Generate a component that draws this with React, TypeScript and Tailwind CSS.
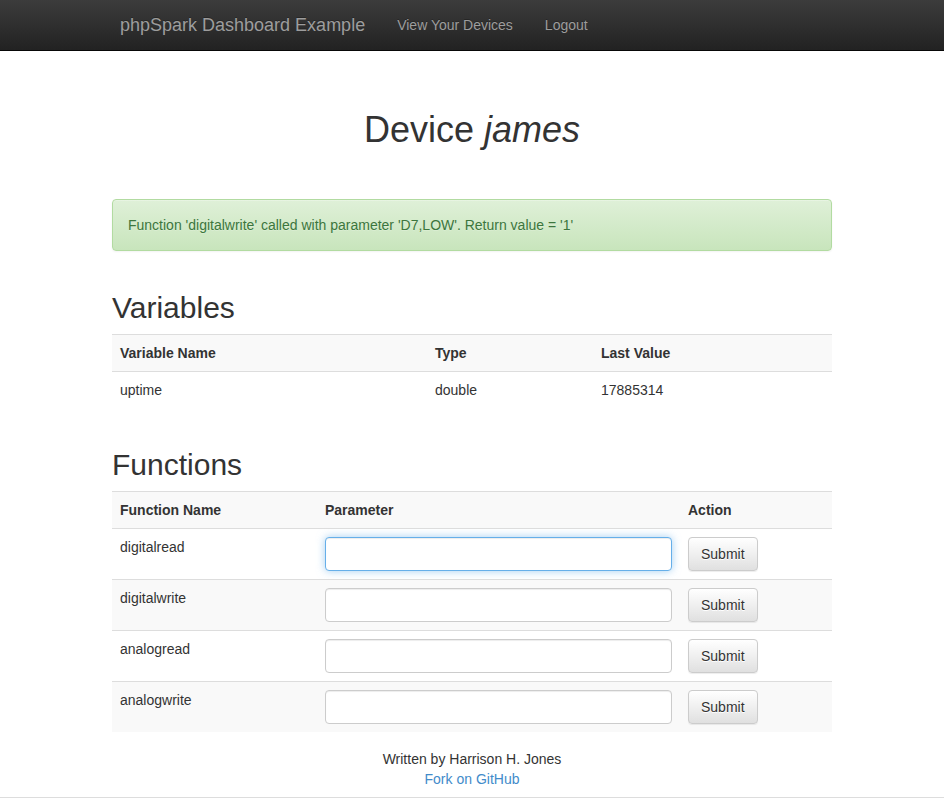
import React from 'react';

const variables = [{ name: 'uptime', type: 'double', value: '17885314' }];
const functions = ['digitalread', 'digitalwrite', 'analogread', 'analogwrite'];

export default function App() {
  return (
    <div className="min-h-screen bg-white text-[14px] leading-[20px] text-[#333] font-['Liberation_Sans',Arial,sans-serif]">
      <nav className="h-[51px] border-b border-[#080808] bg-[linear-gradient(to_bottom,#3c3c3c_0%,#222_100%)]">
        <div className="mx-auto flex h-[50px] w-[750px] px-[8px]">
          <a className="block py-[15px] pl-[15px] pr-[16px] text-[18px] leading-[20px] text-[#9d9d9d] [text-shadow:0_-1px_0_rgba(0,0,0,0.25)]" href="#">
            phpSpark Dashboard Example
          </a>
          <a className="block py-[15px] pl-[16px] pr-[16px] leading-[20px] text-[#9d9d9d] [text-shadow:0_-1px_0_rgba(0,0,0,0.25)]" href="#">
            View Your Devices
          </a>
          <a className="block py-[15px] pl-[16px] pr-[15px] leading-[20px] text-[#9d9d9d] [text-shadow:0_-1px_0_rgba(0,0,0,0.25)]" href="#">
            Logout
          </a>
        </div>
      </nav>

      <main className="mx-auto w-[750px] px-[15px]">
        <h1 className="mt-[59px] text-center text-[36px] leading-[40px] font-normal">
          Device <em>james</em>
        </h1>

        <div className="mt-[49px] rounded-[4px] border border-[#b2dba1] bg-[linear-gradient(to_bottom,#dff0d8_0%,#c8e5bc_100%)] p-[15px] text-[#3c763d] shadow-[inset_0_1px_0_rgba(255,255,255,0.25),0_1px_2px_rgba(0,0,0,0.05)] [text-shadow:0_1px_0_rgba(255,255,255,0.2)]">
          Function 'digitalwrite' called with parameter 'D7,LOW'. Return value = '1'
        </div>

        <h2 className="mt-[40px] mb-[10px] text-[30px] leading-[33px] font-normal">Variables</h2>
        <table className="w-full border-collapse">
          <tbody>
            <tr className="bg-[#f9f9f9]">
              <th className="w-[315px] border-t border-[#ddd] p-[8px] text-left font-bold">Variable Name</th>
              <th className="w-[166px] border-t border-[#ddd] p-[8px] text-left font-bold">Type</th>
              <th className="border-t border-[#ddd] p-[8px] text-left font-bold">Last Value</th>
            </tr>
            {variables.map((v) => (
              <tr key={v.name}>
                <td className="border-t border-[#ddd] p-[8px] align-top">{v.name}</td>
                <td className="border-t border-[#ddd] p-[8px] align-top">{v.type}</td>
                <td className="border-t border-[#ddd] p-[8px] align-top">{v.value}</td>
              </tr>
            ))}
          </tbody>
        </table>

        <h2 className="mt-[40px] mb-[10px] text-[30px] leading-[33px] font-normal">Functions</h2>
        <table className="w-full border-collapse">
          <tbody>
            <tr className="bg-[#f9f9f9]">
              <th className="w-[205px] border-t border-[#ddd] p-[8px] text-left font-bold">Function Name</th>
              <th className="w-[363px] border-t border-[#ddd] p-[8px] text-left font-bold">Parameter</th>
              <th className="border-t border-[#ddd] p-[8px] text-left font-bold">Action</th>
            </tr>
            {functions.map((f, i) => (
              <tr key={f} className={i % 2 === 1 ? 'bg-[#f9f9f9]' : ''}>
                <td className="border-t border-[#ddd] p-[8px] align-top">{f}</td>
                <td className="border-t border-[#ddd] p-[8px] align-top">
                  <input
                    type="text"
                    className={`block h-[34px] w-full rounded-[4px] border bg-white px-[12px] py-[6px] outline-none ${
                      i === 0
                        ? 'border-[#66afe9] shadow-[inset_0_1px_1px_rgba(0,0,0,0.075),0_0_8px_rgba(102,175,233,0.6)]'
                        : 'border-[#ccc] shadow-[inset_0_1px_1px_rgba(0,0,0,0.075)]'
                    }`}
                  />
                </td>
                <td className="border-t border-[#ddd] p-[8px] align-top">
                  <button
                    type="button"
                    className="h-[34px] rounded-[4px] border border-[#ccc] bg-[linear-gradient(to_bottom,#fff_0%,#e0e0e0_100%)] px-[12px] py-[6px] leading-[20px] text-[#333] shadow-[inset_0_1px_0_rgba(255,255,255,0.15),0_1px_1px_rgba(0,0,0,0.075)] [text-shadow:0_1px_0_#fff]"
                  >
                    Submit
                  </button>
                </td>
              </tr>
            ))}
          </tbody>
        </table>

        <footer className="mt-[17px] text-center">
          <div>Written by Harrison H. Jones</div>
          <a className="text-[#428bca]" href="#">Fork on GitHub</a>
        </footer>
      </main>
      <div className="mx-auto mt-[8px] w-full border-t border-[#ddd]" />
      <div className="h-[20px]" />
    </div>
  );
}
